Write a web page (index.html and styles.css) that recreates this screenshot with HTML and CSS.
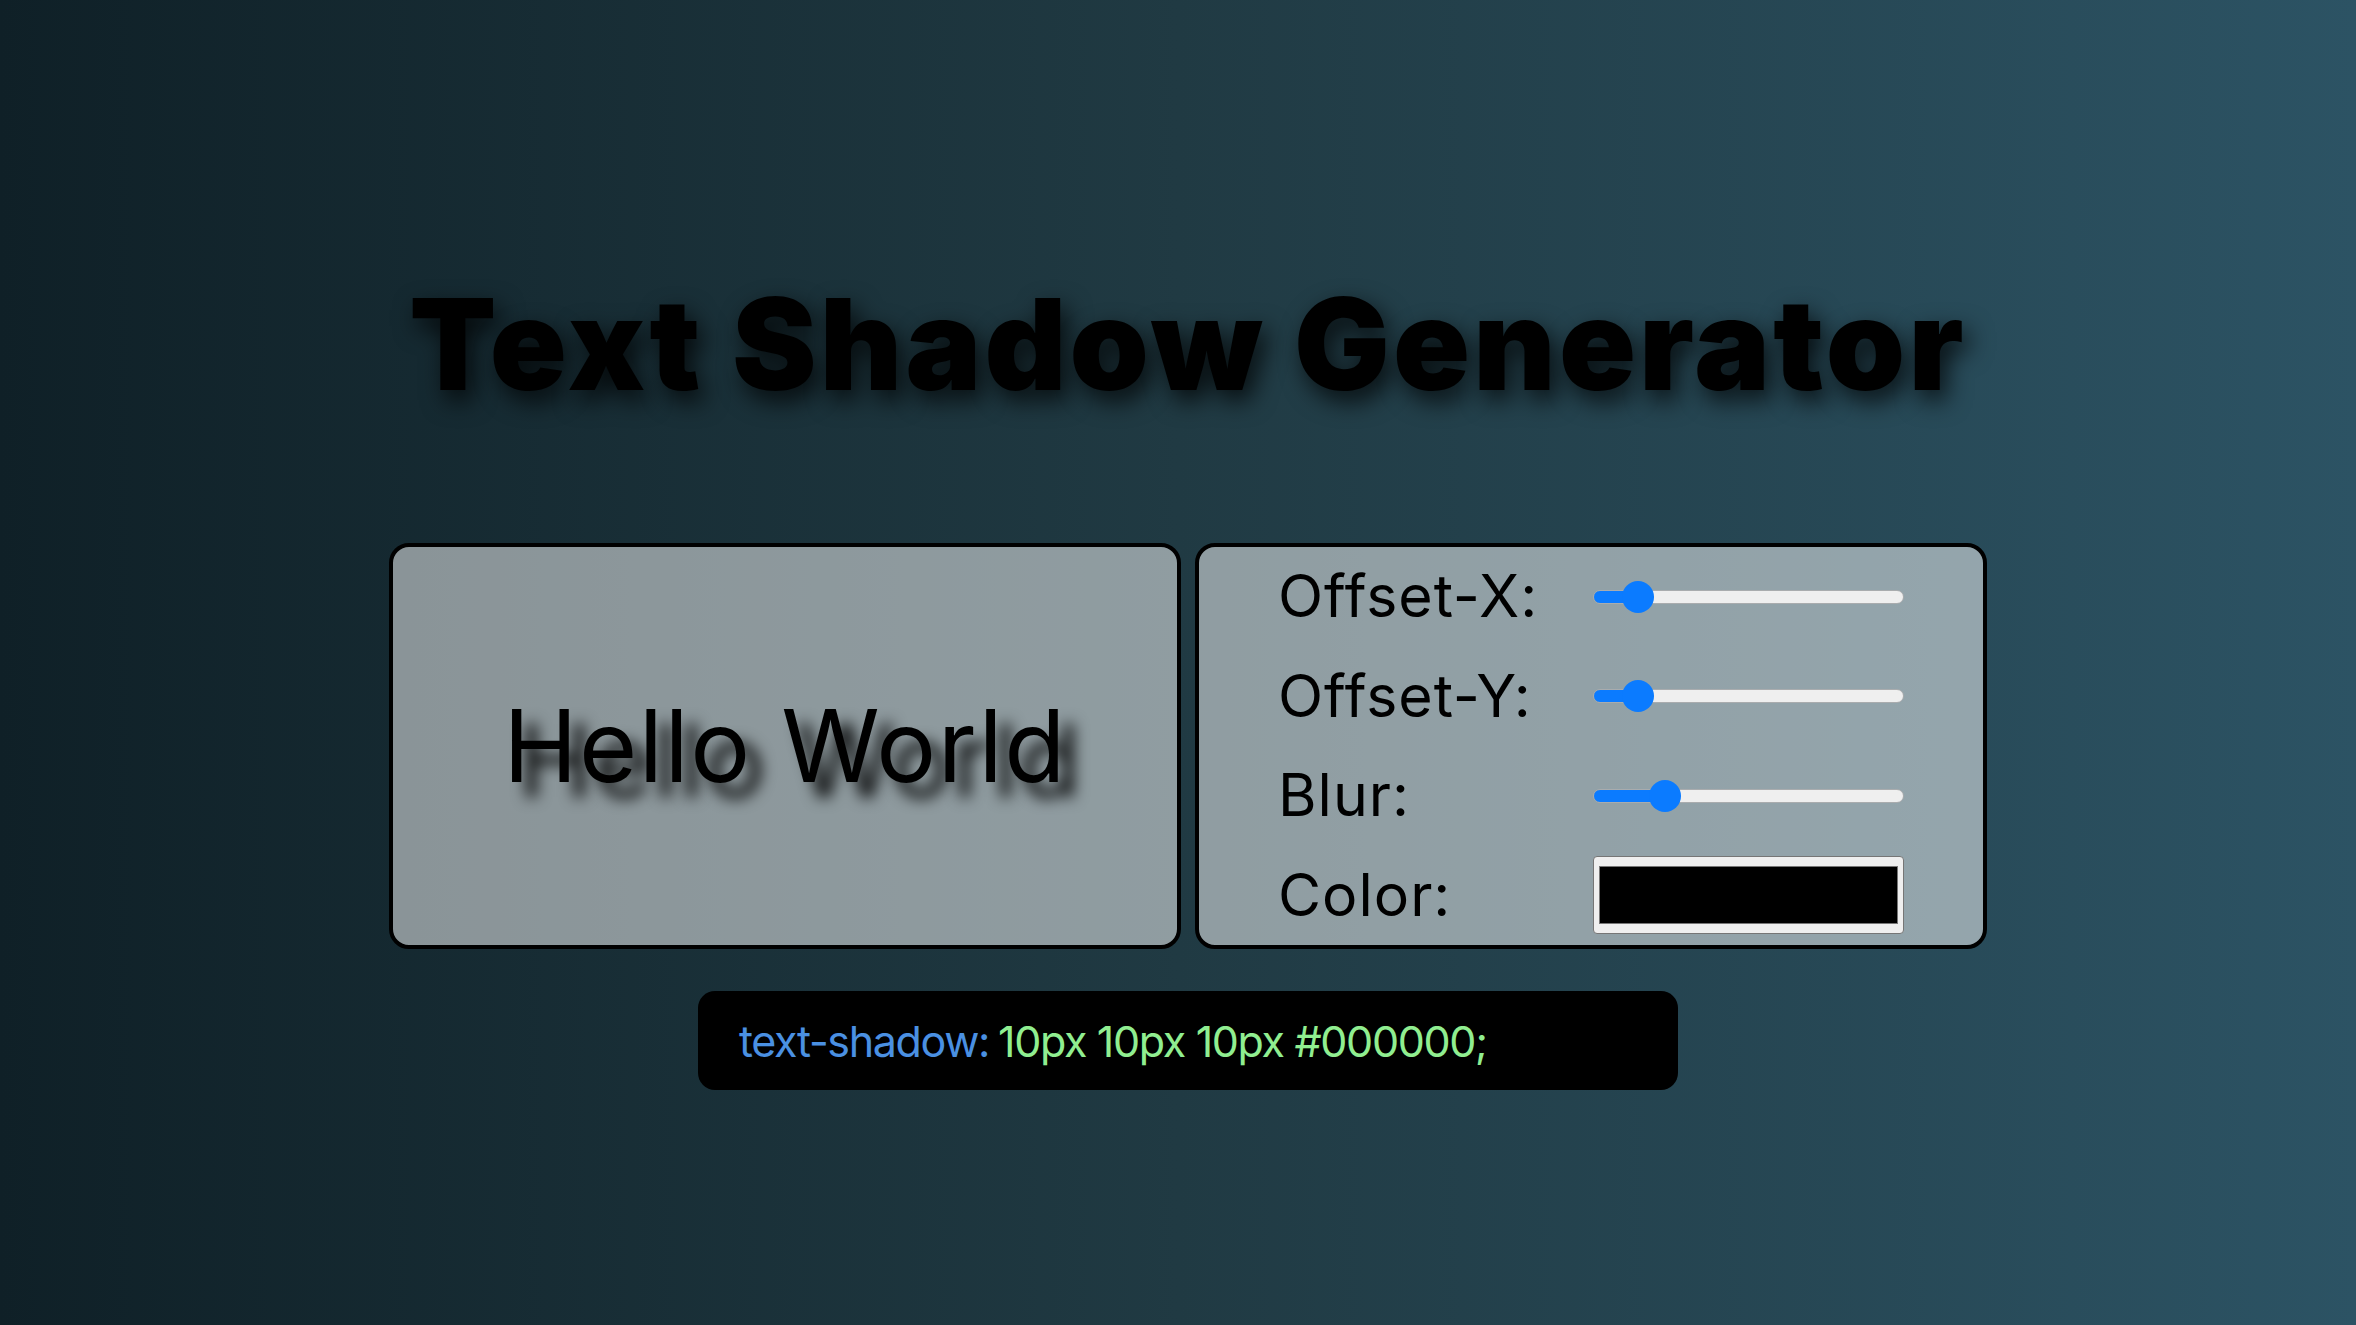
FILE: index.html
```html
<!DOCTYPE html>
<html lang="en">
<head>
<meta charset="utf-8">
<title>Text Shadow Generator</title>
<link rel="stylesheet" href="styles.css">
</head>
<body>
<main class="page">
  <h1 class="title">Text Shadow Generator</h1>
  <section class="panels">
    <div class="panel preview">
      <p class="preview-text">Hello World</p>
    </div>
    <div class="panel controls">
      <label class="ctl-label" for="ox">Offset-X:</label>
      <input class="range" id="ox" type="range" min="0" max="100" value="10" style="--v:10">
      <label class="ctl-label" for="oy">Offset-Y:</label>
      <input class="range" id="oy" type="range" min="0" max="100" value="10" style="--v:10">
      <label class="ctl-label" for="bl">Blur:</label>
      <input class="range" id="bl" type="range" min="0" max="50" value="10" style="--v:20">
      <label class="ctl-label" for="col">Color:</label>
      <input class="color" id="col" type="color" value="#000000">
    </div>
  </section>
  <div class="code">
    <span class="prop">text-shadow:</span> <span class="val">10px 10px 10px #000000;</span>
  </div>
</main>
</body>
</html>
```
FILE: styles.css
```css
html, body {
  margin: 0;
  height: 100%;
}

body {
  background: linear-gradient(to right, #0f2027, #203a43, #2c5364);
  font-family: Inter, "Noto Sans", "Liberation Sans", sans-serif;
  color: #000;
  overflow: hidden;
}

.page {
  box-sizing: border-box;
  min-height: 100vh;
  display: flex;
  flex-direction: column;
  align-items: center;
  padding: 281px 0 0 20px;
}

.title {
  margin: 0;
  font-size: 127px;
  line-height: 127px;
  font-weight: 900;
  letter-spacing: 3.2px;
  color: #000;
  text-shadow: 6px 10px 24px rgba(0, 0, 0, 0.8);
  white-space: nowrap;
}

.panels {
  display: flex;
  gap: 14px;
  margin-top: 135px;
}

.panel {
  box-sizing: border-box;
  width: 792px;
  height: 406px;
  border: 4px solid #000;
  border-radius: 20px;
  background: rgba(255, 255, 255, 0.5);
}

.preview {
  display: flex;
  align-items: center;
  justify-content: center;
}

.preview-text {
  margin: 0;
  font-size: 100px;
  line-height: 1.2;
  font-weight: 400;
  letter-spacing: 1.5px;
  text-shadow: 15px 15px 15px #000;
  white-space: nowrap;
}

.controls {
  display: grid;
  grid-template-columns: 315px 311px;
  grid-template-rows: repeat(4, 1fr);
  justify-content: center;
  align-items: center;
}

.ctl-label {
  font-size: 59px;
  line-height: 1.2;
  font-weight: 400;
  letter-spacing: 1px;
  white-space: nowrap;
}

.range {
  -webkit-appearance: none;
  appearance: none;
  margin: 0;
  width: 311px;
  height: 14px;
  border-radius: 7px;
  box-sizing: border-box;
  border: 1px solid #a9acae;
  background: linear-gradient(to right,
    #0b7bff 0,
    #0b7bff calc(16px + (100% - 32px) * var(--v) / 100),
    #efefef calc(16px + (100% - 32px) * var(--v) / 100),
    #efefef 100%);
  outline: none;
}

.range::-webkit-slider-thumb {
  -webkit-appearance: none;
  appearance: none;
  width: 32px;
  height: 32px;
  border-radius: 50%;
  background: #0b7bff;
  border: none;
}

.color {
  -webkit-appearance: none;
  appearance: none;
  box-sizing: border-box;
  margin: 0;
  width: 311px;
  height: 78px;
  padding: 0;
  border: 1px solid #767676;
  border-radius: 4px;
  background: #efefef;
  cursor: pointer;
}

.color::-webkit-color-swatch-wrapper {
  padding: 9px 5px;
}

.color::-webkit-color-swatch {
  border: 1px solid #777;
  border-radius: 0;
}

.code {
  box-sizing: border-box;
  width: 980px;
  height: 99px;
  margin-top: 42px;
  padding: 0 41px;
  display: flex;
  align-items: center;
  gap: 9px;
  background: #000;
  border-radius: 17px;
  font-size: 43px;
  font-weight: 400;
  letter-spacing: -1.35px;
  white-space: nowrap;
}

.prop {
  color: #4a90e2;
}

.val {
  color: #90ee90;
}
```
